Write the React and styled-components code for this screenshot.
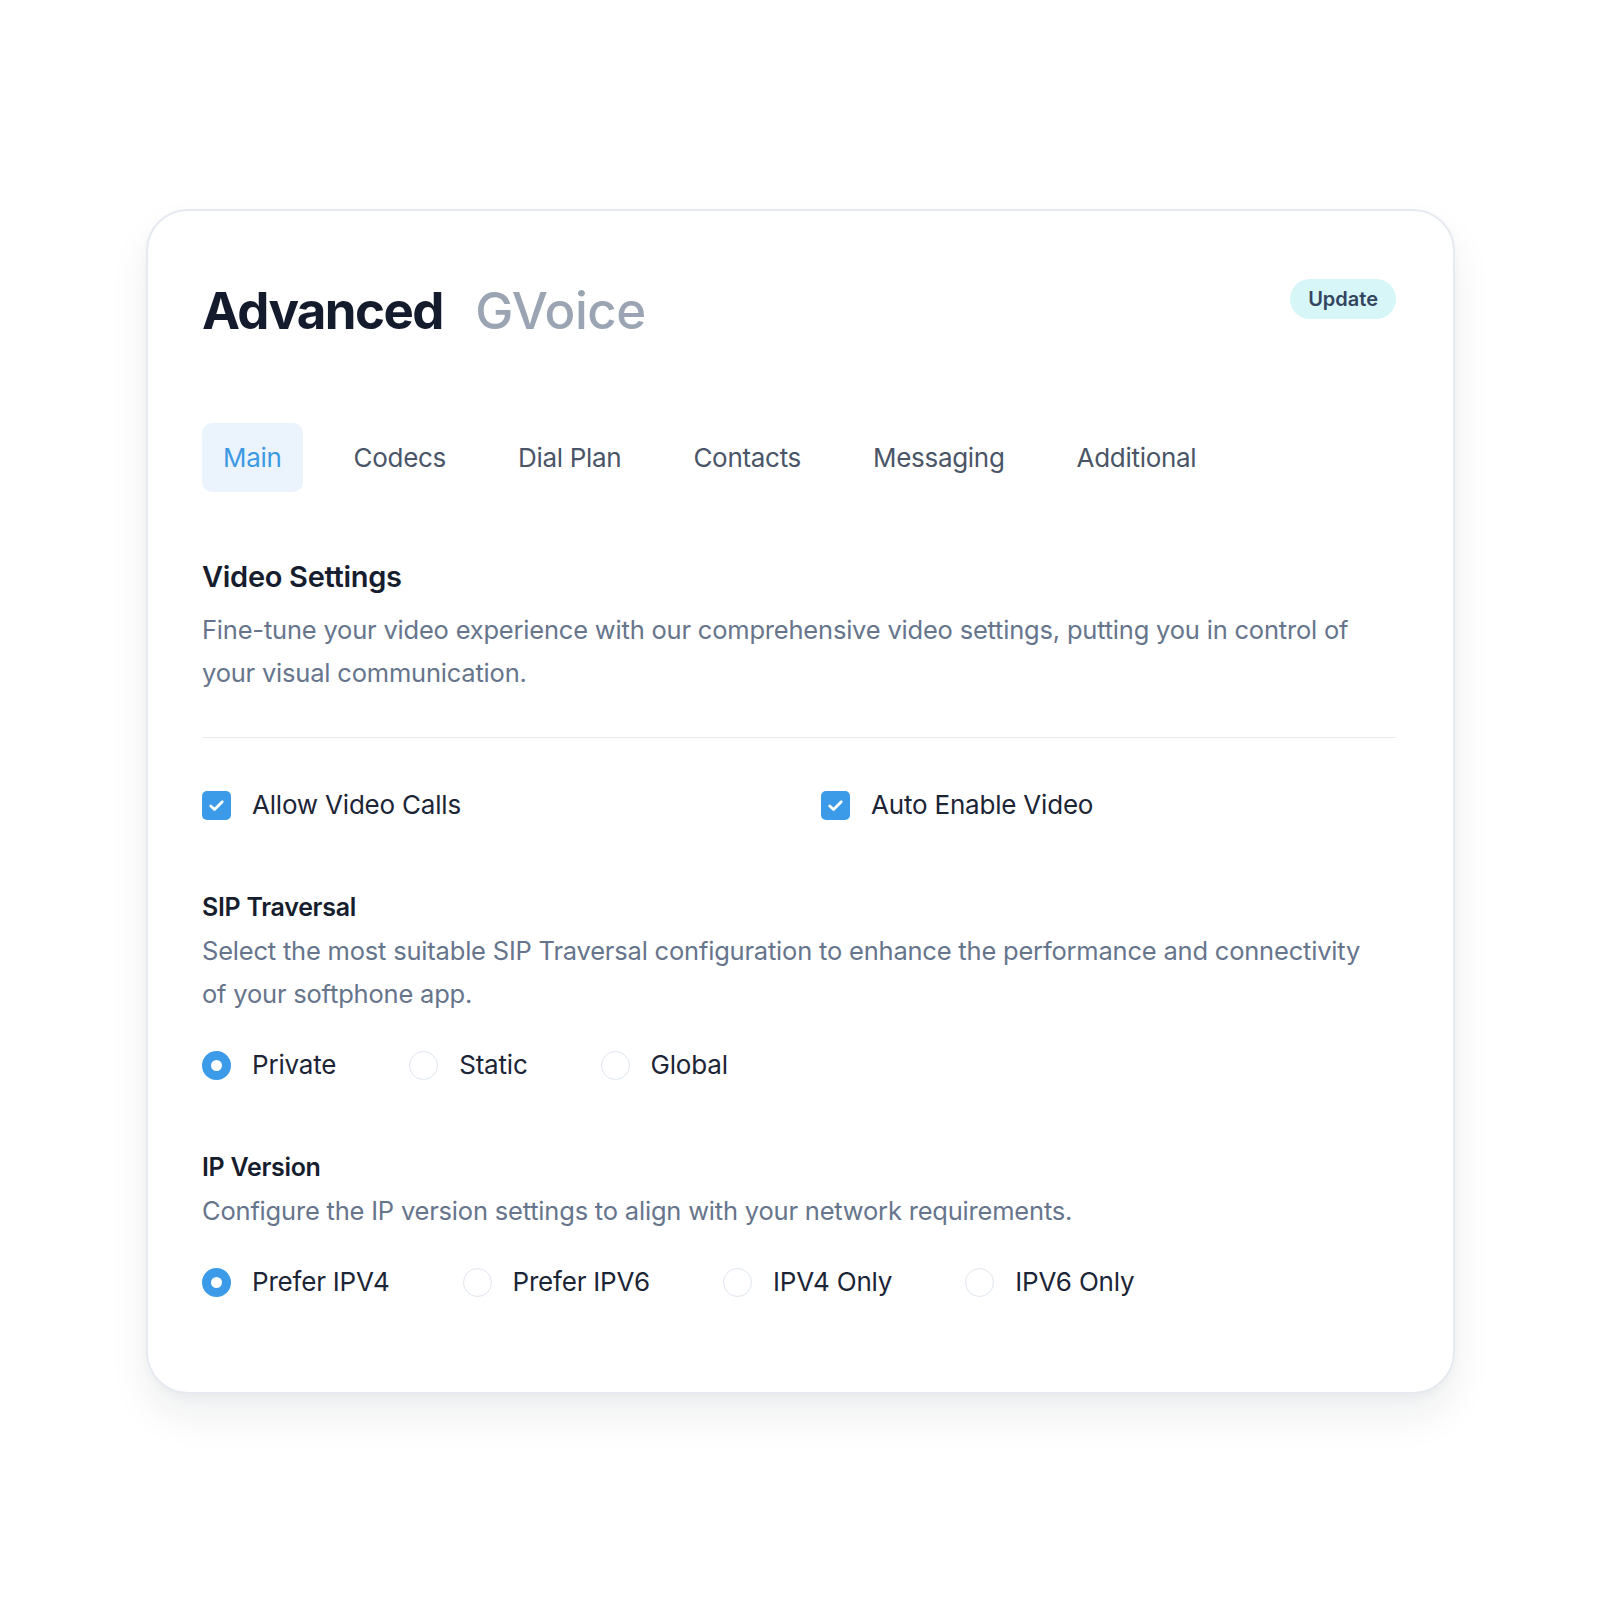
import React, { useState } from "react";
import styled, { createGlobalStyle } from "styled-components";

const GlobalStyle = createGlobalStyle`
  html, body {
    margin: 0;
    padding: 0;
    background: #fff;
  }
  body {
    font-family: "Inter", "Noto Sans", sans-serif;
    -webkit-font-smoothing: antialiased;
  }
  * { box-sizing: border-box; }
`;

const tabs = ["Main", "Codecs", "Dial Plan", "Contacts", "Messaging", "Additional"];

const sipOptions = ["Private", "Static", "Global"];
const ipOptions = ["Prefer IPV4", "Prefer IPV6", "IPV4 Only", "IPV6 Only"];

function CheckItem({ label, checked, onToggle }) {
    return (
        <Option onClick={onToggle}>
            <CheckBox $checked={checked}>
                {checked && (
                    <svg width="21" height="21" viewBox="0 0 16 16" fill="none">
                        <path d="M3.6 8.4l2.9 2.7 5.9-6" stroke="#fff" strokeWidth="2.1" strokeLinecap="round" strokeLinejoin="round"/>
                    </svg>
                )}
            </CheckBox>
            <OptionLabel>{label}</OptionLabel>
        </Option>
    );
}

function RadioGroup({ options, value, onChange }) {
    return (
        <RadioRow>
            {options.map((opt) => (
                <Option key={opt} onClick={() => onChange(opt)}>
                    <Radio $checked={value === opt}/>
                    <OptionLabel>{opt}</OptionLabel>
                </Option>
            ))}
        </RadioRow>
    );
}

export default function App() {
    const [tab, setTab] = useState("Main");
    const [allowVideo, setAllowVideo] = useState(true);
    const [autoVideo, setAutoVideo] = useState(true);
    const [sip, setSip] = useState("Private");
    const [ip, setIp] = useState("Prefer IPV4");

    return (
        <>
            <GlobalStyle/>
            <Page>
                <Card>
                    <Header>
                        <Title>
                            Advanced <span>GVoice</span>
                        </Title>
                        <UpdateBadge>Update</UpdateBadge>
                    </Header>

                    <Tabs>
                        {tabs.map((t) => (
                            <Tab key={t} $active={tab === t} onClick={() => setTab(t)}>
                                {t}
                            </Tab>
                        ))}
                    </Tabs>

                    <SectionTitle>Video Settings</SectionTitle>
                    <Description $gap={12}>
                        Fine-tune your video experience with our comprehensive video settings, putting you in control of your visual communication.
                    </Description>
                    <Divider/>

                    <CheckGrid>
                        <CheckItem label="Allow Video Calls" checked={allowVideo} onToggle={() => setAllowVideo(!allowVideo)}/>
                        <CheckItem label="Auto Enable Video" checked={autoVideo} onToggle={() => setAutoVideo(!autoVideo)}/>
                    </CheckGrid>

                    <Group>
                        <GroupTitle>SIP Traversal</GroupTitle>
                        <Description>
                            Select the most suitable SIP Traversal configuration to enhance the performance and connectivity of your softphone app.
                        </Description>
                        <RadioGroup options={sipOptions} value={sip} onChange={setSip}/>
                    </Group>

                    <Group>
                        <GroupTitle>IP Version</GroupTitle>
                        <Description>
                            Configure the IP version settings to align with your network requirements.
                        </Description>
                        <RadioGroup options={ipOptions} value={ip} onChange={setIp}/>
                    </Group>
                </Card>
            </Page>
        </>
    );
}

const Page = styled.div`
    padding: 209px 0 200px 146px;
`;

const Card = styled.section`
    width: 1309px;
    background: #fff;
    border: 2px solid #e6eaf0;
    border-radius: 42px;
    box-shadow: 0 22px 40px rgba(15, 23, 42, 0.07), 0 4px 10px rgba(15, 23, 42, 0.03);
    padding: 65px 57px 94px 54px;
`;

const Header = styled.div`
    display: flex;
    justify-content: space-between;
    align-items: flex-start;
`;

const Title = styled.h1`
    margin: 0;
    font-size: 51px;
    line-height: 70px;
    font-weight: 700;
    letter-spacing: -1.6px;
    color: #141b2d;

    span {
        margin-left: 22px;
        font-weight: 500;
        color: #9ba4b2;
        letter-spacing: -0.5px;
    }
`;

const UpdateBadge = styled.button`
    margin-top: 3px;
    height: 40px;
    padding: 0 18px;
    border: none;
    border-radius: 20px;
    background: #d6f6f8;
    color: #33455f;
    font-family: inherit;
    font-size: 20px;
    font-weight: 600;
    cursor: pointer;
`;

const Tabs = styled.nav`
    display: flex;
    gap: 30px;
    margin-top: 77px;
`;

const Tab = styled.button`
    height: 69px;
    padding: 0 21px;
    border: none;
    border-radius: 10px;
    background: ${(p) => (p.$active ? "#ebf4fd" : "transparent")};
    color: ${(p) => (p.$active ? "#3d9ae2" : "#4a5568")};
    font-family: inherit;
    font-size: 26px;
    font-weight: 400;
    letter-spacing: -0.3px;
    cursor: pointer;
`;

const SectionTitle = styled.h2`
    margin: 66px 0 0;
    font-size: 29px;
    line-height: 38px;
    font-weight: 600;
    color: #161d2e;
    letter-spacing: -0.3px;
`;

const Description = styled.p`
    margin: ${(p) => p.$gap ?? 5}px 0 0;
    font-size: 25.5px;
    line-height: 43px;
    color: #66758c;
    letter-spacing: -0.2px;
    max-width: 1185px;
`;

const Divider = styled.hr`
    margin: 43px 0 0;
    border: none;
    border-top: 1.5px solid #e8ecf1;
`;

const CheckGrid = styled.div`
    display: grid;
    grid-template-columns: 1fr 1fr;
    column-gap: 44px;
    margin-top: 51px;
`;

const Option = styled.label`
    display: flex;
    align-items: center;
    gap: 21px;
    cursor: pointer;
`;

const OptionLabel = styled.span`
    font-size: 26px;
    line-height: 32px;
    color: #1c2536;
    letter-spacing: -0.2px;
`;

const CheckBox = styled.span`
    width: 29px;
    height: 29px;
    flex: none;
    border-radius: 5px;
    display: flex;
    align-items: center;
    justify-content: center;
    background: ${(p) => (p.$checked ? "#3c9be8" : "#fff")};
    border: ${(p) => (p.$checked ? "none" : "1.5px solid #dfe6ee")};
`;

const Radio = styled.span`
    width: 29px;
    height: 29px;
    flex: none;
    border-radius: 50%;
    background: #fff;
    border: ${(p) => (p.$checked ? "9px solid #3c9be8" : "1.5px solid #dfe6ee")};
`;

const Group = styled.div`
    margin-top: 69px;
`;

const GroupTitle = styled.h3`
    margin: 0;
    font-size: 25px;
    line-height: 34px;
    font-weight: 600;
    color: #161d2e;
    letter-spacing: -0.3px;
`;

const RadioRow = styled.div`
    display: flex;
    gap: 73px;
    margin-top: 34px;
`;
